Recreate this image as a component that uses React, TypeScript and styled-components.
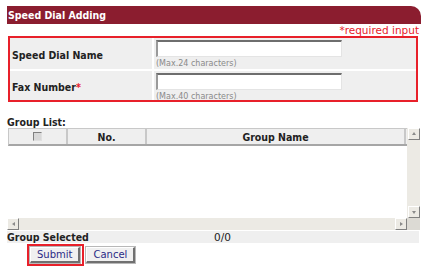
import styled, { createGlobalStyle } from 'styled-components';

const GlobalStyle = createGlobalStyle`
  body {
    margin: 0;
    background: #ffffff;
    font-family: 'DejaVu Sans', Verdana, sans-serif;
    color: #222222;
  }
`;

const boldFont = `'DejaVu Sans Condensed', 'DejaVu Sans', Tahoma, sans-serif`;

const Page = styled.div`
  padding: 6px 0 0 7px;
  width: 414px;
`;

const Header = styled.div`
  height: 18px;
  background: #8b1d2f;
  border-top-right-radius: 10px;
  color: #ffffff;
  font-family: ${boldFont};
  font-size: 10.5px;
  font-weight: 700;
  line-height: 18px;
  padding-left: 1px;
`;

const RequiredNote = styled.div`
  text-align: right;
  color: #e8202a;
  font-size: 10.5px;
  line-height: 13px;
  height: 12px;
  padding-right: 2px;
`;

const FormBox = styled.div`
  margin-left: 1px;
  width: 406px;
  border: 2px solid #e8202a;
  display: flex;
  flex-direction: column;
  gap: 2px;
  background: #ffffff;
`;

const FormRow = styled.div<{ $height: number }>`
  display: grid;
  grid-template-columns: 142px 1fr;
  gap: 2px;
  height: ${p => p.$height}px;
  overflow: hidden;
`;

const LabelCell = styled.div`
  background: #efefef;
  display: flex;
  align-items: center;
  padding: 2px 0 0 2px;
  font-family: ${boldFont};
  font-size: 10.5px;
  font-weight: 700;
  color: #222222;
`;

const Star = styled.span`
  color: #e8202a;
`;

const InputCell = styled.div`
  background: #efefef;
  padding: 2px 0 0 2px;
  display: flex;
  flex-direction: column;
`;

const TextInput = styled.input`
  box-sizing: border-box;
  width: 186px;
  height: 17px;
  margin: 0;
  padding: 0;
  background: #ffffff;
  border-style: solid;
  border-width: 2px 1px 1px 2px;
  border-color: #6e6e6e #e4e4e4 #e4e4e4 #9a9a9a;
`;

const Hint = styled.div`
  font-size: 8px;
  color: #8a8a8a;
  margin-top: 2px;
  line-height: 9px;
`;

const SectionLabel = styled.div`
  font-family: ${boldFont};
  font-size: 10.5px;
  font-weight: 700;
  color: #222222;
  margin-top: 15px;
  line-height: 11px;
  height: 11px;
`;

const ListFrame = styled.div`
  display: grid;
  grid-template-columns: 400px 13px;
  grid-template-rows: 90px 12px;
  width: 413px;
`;

const ListBody = styled.div`
  background: #ffffff;
  padding-left: 1px;
`;

const HeaderTable = styled.div`
  display: grid;
  grid-template-columns: 59px 79px 259px;
  height: 18px;
  box-sizing: border-box;
  border-top: 1px solid #c8c8c8;
  border-bottom: 2px solid #a6a6a6;
  border-left: 1px solid #c8c8c8;
  background: #efefef;
`;

const HeadCell = styled.div`
  display: flex;
  align-items: center;
  justify-content: center;
  border-right: 2px solid #c8c8c8;
  font-family: ${boldFont};
  font-size: 10.5px;
  font-weight: 700;
  color: #222222;
`;

const FakeCheck = styled.span`
  width: 7px;
  height: 7px;
  border-style: solid;
  border-width: 1px;
  border-color: #808080 #e0e0e0 #e0e0e0 #808080;
  background: #d8d8d8;
`;

const VTrack = styled.div`
  background: #eceae4;
  display: flex;
  flex-direction: column;
  justify-content: space-between;
  padding-left: 1px;
`;

const HTrack = styled.div`
  background: #eceae4;
  display: flex;
  justify-content: space-between;
  align-items: stretch;
`;

const Corner = styled.div`
  background: #dcdad4;
`;

const ArrowBtn = styled.div`
  box-sizing: border-box;
  width: 12px;
  height: 12px;
  background: #eceae4;
  border-style: solid;
  border-width: 1px;
  border-color: #ffffff #808080 #808080 #ffffff;
  display: flex;
  align-items: center;
  justify-content: center;
`;

const Arrow = styled.span<{ $dir: 'up' | 'down' | 'left' | 'right' }>`
  width: 0;
  height: 0;
  border: 2px solid transparent;
  ${p => p.$dir === 'up' && 'border-bottom: 3px solid #8a8a8a; border-top: 0; margin-top: -1px;'}
  ${p => p.$dir === 'down' && 'border-top: 3px solid #8a8a8a; border-bottom: 0;'}
  ${p => p.$dir === 'left' && 'border-right: 3px solid #8a8a8a; border-left: 0;'}
  ${p => p.$dir === 'right' && 'border-left: 3px solid #8a8a8a; border-right: 0;'}
`;

const SelectedRow = styled.div`
  display: grid;
  grid-template-columns: 207px 1fr;
  background: #efefef;
  height: 12px;
  line-height: 13px;
  width: 412px;
  font-size: 10.5px;
  margin-top: 1px;
`;

const SelectedLabel = styled.span`
  font-family: ${boldFont};
  font-weight: 700;
`;

const ButtonRow = styled.div`
  display: flex;
  align-items: center;
  gap: 2px;
  margin-top: 1px;
  padding-left: 20px;
`;

const FocusRing = styled.div`
  display: flex;
  border: 2px solid #e8202a;
  padding: 1px 2px 1px 1px;
`;

const Button = styled.button`
  font-family: 'DejaVu Sans', Verdana, sans-serif;
  font-size: 10px;
  color: #2b2b86;
  background: #f0f0f0;
  height: 16px;
  padding: 0 6px;
  margin: 0;
  border-style: solid;
  border-width: 1px 2px 2px 1px;
  border-color: #ffffff #707070 #707070 #ffffff;
  outline: 1px solid #b8b8b8;
  line-height: 12px;
`;

export default function App() {
  return (
    <Page>
      <GlobalStyle />
      <Header>Speed Dial Adding</Header>
      <RequiredNote>*required input</RequiredNote>
      <FormBox>
        <FormRow $height={31}>
          <LabelCell>Speed Dial Name</LabelCell>
          <InputCell>
            <TextInput type="text" />
            <Hint>(Max.24 characters)</Hint>
          </InputCell>
        </FormRow>
        <FormRow $height={29}>
          <LabelCell>
            Fax Number<Star>*</Star>
          </LabelCell>
          <InputCell>
            <TextInput type="text" />
            <Hint>(Max.40 characters)</Hint>
          </InputCell>
        </FormRow>
      </FormBox>
      <SectionLabel>Group List:</SectionLabel>
      <ListFrame>
        <ListBody>
          <HeaderTable>
            <HeadCell>
              <FakeCheck />
            </HeadCell>
            <HeadCell>No.</HeadCell>
            <HeadCell>Group Name</HeadCell>
          </HeaderTable>
        </ListBody>
        <VTrack>
          <ArrowBtn>
            <Arrow $dir="up" />
          </ArrowBtn>
          <ArrowBtn>
            <Arrow $dir="down" />
          </ArrowBtn>
        </VTrack>
        <HTrack>
          <ArrowBtn>
            <Arrow $dir="left" />
          </ArrowBtn>
          <ArrowBtn>
            <Arrow $dir="right" />
          </ArrowBtn>
        </HTrack>
        <Corner />
      </ListFrame>
      <SelectedRow>
        <SelectedLabel>Group Selected</SelectedLabel>
        <span>0/0</span>
      </SelectedRow>
      <ButtonRow>
        <FocusRing>
          <Button type="button">Submit</Button>
        </FocusRing>
        <Button type="button">Cancel</Button>
      </ButtonRow>
    </Page>
  );
}
